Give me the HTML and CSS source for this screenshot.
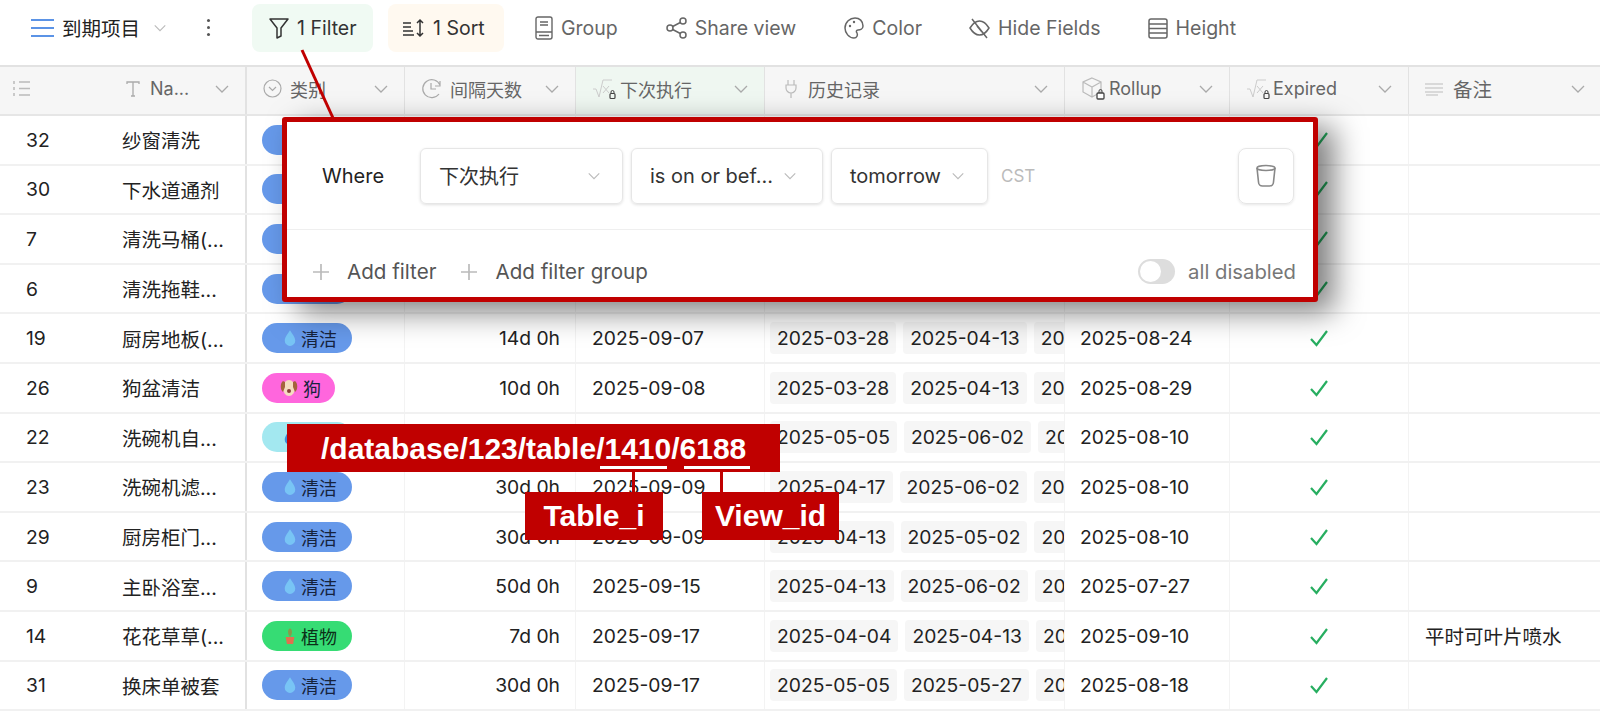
FILE: index.html
```html
<!DOCTYPE html>
<html lang="en">
<head>
  <meta charset="UTF-8">
  <meta name="viewport" content="width=device-width, initial-scale=1.0">
  <title>到期项目</title>
  <link rel="stylesheet" href="styles.css">
</head>
<body>
  <svg class="defs" width="0" height="0">
    <symbol id="chev" viewBox="0 0 16 16"><path d="M2 5l6 6 6-6" fill="none" stroke="currentColor" stroke-width="1.3"/></symbol>
    <symbol id="drop" viewBox="0 0 16 20"><path d="M8 1c3 5 6 8 6 12a6 6 0 0 1-12 0c0-4 3-7 6-12z" fill="#78c4f5"/></symbol>
    <symbol id="drop-dark" viewBox="0 0 16 20"><path d="M8 1c3 5 6 8 6 12a6 6 0 0 1-12 0c0-4 3-7 6-12z" fill="#3f8fd8"/></symbol>
    <symbol id="dog" viewBox="0 0 20 20">
      <ellipse cx="10" cy="10" rx="6" ry="8" fill="#f5dcc0"/>
      <path d="M4 3c-3 2-3 9 0 11l2-5V4zM16 3c3 2 3 9 0 11l-2-5V4z" fill="#a5633c"/>
      <circle cx="10" cy="13" r="2" fill="#8a3b3b"/>
    </symbol>
    <symbol id="plant" viewBox="0 0 16 20">
      <path d="M8 1c3 2 3 6 0 10-3-4-3-8 0-10z" fill="#8a9a4a"/>
      <path d="M3 11h10l-1.500 8h-7z" fill="#e2704f"/>
    </symbol>
    <symbol id="check" viewBox="0 0 20 18"><path d="M2 10l5.500 6L18 2" fill="none" stroke="#27ae60" stroke-width="2.200"/></symbol>
    <symbol id="sqrt" viewBox="0 0 24 22">
      <path d="M1 11h3l3 8 4-17h9" fill="none" stroke="#ccc" stroke-width="1"/>
      <path d="M11 8l6 7M17 8l-6 7" stroke="#ccc" stroke-width="1"/>
      <rect x="18" y="15.500" width="5" height="5" rx="1" fill="none" stroke="#444" stroke-width="1.200"/>
      <path d="M19 15.500v-1.500a1.500 1.500 0 0 1 3 0v1.500" fill="none" stroke="#444"/>
    </symbol>
    <symbol id="plus" viewBox="0 0 18 18"><path d="M9 1v16M1 9h16" stroke="#bbb" stroke-width="1.700"/></symbol>
  </svg>

  <div class="toolbar">
    <svg class="menu-icon" width="23" height="20" viewBox="0 0 23 20"><path d="M0 2h23M0 10h23M0 18h23" stroke="#5b93e6" stroke-width="2"/></svg>
    <span class="view-name">到期项目</span>
    <svg class="view-chev" width="14" height="14"><use href="#chev"/></svg>
    <span class="dots"></span>
    <div class="tool tool-filter">
      <svg width="22" height="24" viewBox="0 0 22 24"><path d="M2 3h18l-7 9v8l-4 2V12z" fill="none" stroke="#333" stroke-width="1.500" stroke-linejoin="round"/></svg>
      <span>1 Filter</span>
    </div>
    <div class="tool tool-sort">
      <svg width="23" height="20" viewBox="0 0 23 20"><path d="M1 5h8M1 9h8M1 13h10M1 17h11M18 2v16M15 5l3-3 3 3M15 15l3 3 3-3" fill="none" stroke="#333" stroke-width="1.500"/></svg>
      <span>1 Sort</span>
    </div>
    <div class="tool tool-group">
      <svg width="18" height="24" viewBox="0 0 18 24"><path d="M3 1h12a2 2 0 0 1 2 2v18a2 2 0 0 1-2 2H3a2 2 0 0 1-2-2V3a2 2 0 0 1 2-2zM1 16h16M5 6h8M5 9h8M4 19.500h10" fill="none" stroke="#666" stroke-width="1.400"/></svg>
      <span>Group</span>
    </div>
    <div class="tool tool-share">
      <svg width="21" height="24" viewBox="0 0 21 24"><circle cx="4" cy="12" r="3" fill="none" stroke="#666" stroke-width="1.500"/><circle cx="17" cy="5" r="3" fill="none" stroke="#666" stroke-width="1.500"/><circle cx="17" cy="19" r="3" fill="none" stroke="#666" stroke-width="1.500"/><path d="M6.700 10.500l7.600-4M6.700 13.500l7.600 4" stroke="#666" stroke-width="1.500"/></svg>
      <span>Share view</span>
    </div>
    <div class="tool tool-color">
      <svg width="20" height="24" viewBox="0 0 20 24"><path d="M11 2c4.500 0 8 3 8 8 0 3-3 4-5 4-2 0-2 2-1 3 1 2 0 5-3 5-5 0-9-5-9-10 0-6 5-10 10-10z" fill="none" stroke="#666" stroke-width="1.500"/><circle cx="6" cy="10" r="1.200" fill="#666"/><circle cx="10" cy="6" r="1.200" fill="#666"/></svg>
      <span>Color</span>
    </div>
    <div class="tool tool-hide">
      <svg width="21" height="24" viewBox="0 0 21 24"><path d="M1 12c3-5 6-7 9.500-7S17 7 20 12c-3 5-6 7-9.500 7S4 17 1 12z" fill="none" stroke="#666" stroke-width="1.500"/><path d="M3 3l15 19M8 10l5 6" stroke="#666" stroke-width="1.500"/></svg>
      <span>Hide Fields</span>
    </div>
    <div class="tool tool-height">
      <svg width="20" height="24" viewBox="0 0 20 24"><rect x="1" y="3" width="18" height="19" rx="2" fill="none" stroke="#666" stroke-width="1.500"/><path d="M1 8h18M1 12.500h18M1 17h18" stroke="#666" stroke-width="1.500"/></svg>
      <span>Height</span>
    </div>
  </div>

  <div class="table">
    <div class="row head">
      <div class="cell c-id">
        <svg width="17" height="17" viewBox="0 0 17 17"><path d="M6 2h11M6 8.500h11M6 15h11M1 1v3M1 7v3M1 13v3" stroke="#bbb" stroke-width="1.500"/></svg>
      </div>
      <div class="cell c-name">
        <svg width="14" height="16" viewBox="0 0 14 16"><path d="M1 3V1h12v2M7 1v14M5 15h4" fill="none" stroke="#aaa" stroke-width="1.300"/></svg>
        <span>Na...</span><svg class="chev" width="16" height="16"><use href="#chev"/></svg>
      </div>
      <div class="cell c-cat">
        <svg width="19" height="19" viewBox="0 0 19 19"><circle cx="9.500" cy="9.500" r="8.500" fill="none" stroke="#aaa" stroke-width="1.200"/><path d="M6 8l3.500 3.500L13 8" fill="none" stroke="#aaa" stroke-width="1.200"/></svg>
        <span>类别</span><svg class="chev" width="16" height="16"><use href="#chev"/></svg>
      </div>
      <div class="cell c-int">
        <svg width="21" height="21" viewBox="0 0 21 21"><path d="M18 16A9 9 0 1 1 19 7M10 5v6h5M19 3v5h-5" fill="none" stroke="#aaa" stroke-width="1.200"/></svg>
        <span>间隔天数</span><svg class="chev" width="16" height="16"><use href="#chev"/></svg>
      </div>
      <div class="cell c-next">
        <svg class="lock-icon" width="24" height="22"><use href="#sqrt"/></svg>
        <span>下次执行</span><svg class="chev" width="16" height="16"><use href="#chev"/></svg>
      </div>
      <div class="cell c-hist">
        <svg width="12" height="20" viewBox="0 0 12 20"><path d="M3 1v5M9 1v5M1 6h10v3a5 5 0 0 1-10 0zM6 14v5" fill="none" stroke="#bbb" stroke-width="1.200"/></svg>
        <span>历史记录</span><svg class="chev" width="16" height="16"><use href="#chev"/></svg>
      </div>
      <div class="cell c-roll">
        <svg width="24" height="24" viewBox="0 0 24 24"><path d="M10 1l9 4v10l-9 5-9-5V5zM1 5l9 5 9-5M10 10v10" fill="none" stroke="#bbb" stroke-width="1.200"/><rect x="15" y="16" width="7" height="6" rx="1" fill="#fff" stroke="#444" stroke-width="1.300"/><path d="M17 16v-2a1.500 1.500 0 0 1 3 0v2" fill="none" stroke="#444"/></svg>
        <span>Rollup</span><svg class="chev" width="16" height="16"><use href="#chev"/></svg>
      </div>
      <div class="cell c-exp">
        <svg class="lock-icon" width="24" height="22"><use href="#sqrt"/></svg>
        <span>Expired</span><svg class="chev" width="16" height="16"><use href="#chev"/></svg>
      </div>
      <div class="cell c-note">
        <svg width="18" height="14" viewBox="0 0 18 14"><path d="M0 2h18M0 6h18M0 10h18M1 13h12" stroke="#bbb" stroke-width="1.200"/></svg>
        <span>备注</span><svg class="chev" width="16" height="16"><use href="#chev"/></svg>
      </div>
    </div>

    <div class="row">
      <div class="cell c-id">32</div>
      <div class="cell c-name">纱窗清洗</div>
      <div class="cell c-cat"><span class="tag tag-blue tag-wide"></span></div>
      <div class="cell c-int"></div>
      <div class="cell c-next"></div>
      <div class="cell c-hist"></div>
      <div class="cell c-roll"></div>
      <div class="cell c-exp"><svg width="20" height="18"><use href="#check"/></svg></div>
      <div class="cell c-note"></div>
    </div>
    <div class="row">
      <div class="cell c-id">30</div>
      <div class="cell c-name">下水道通剂</div>
      <div class="cell c-cat"><span class="tag tag-blue tag-wide"></span></div>
      <div class="cell c-int"></div>
      <div class="cell c-next"></div>
      <div class="cell c-hist"></div>
      <div class="cell c-roll"></div>
      <div class="cell c-exp"><svg width="20" height="18"><use href="#check"/></svg></div>
      <div class="cell c-note"></div>
    </div>
    <div class="row">
      <div class="cell c-id">7</div>
      <div class="cell c-name">清洗马桶(...</div>
      <div class="cell c-cat"><span class="tag tag-blue tag-wide"></span></div>
      <div class="cell c-int"></div>
      <div class="cell c-next"></div>
      <div class="cell c-hist"></div>
      <div class="cell c-roll"></div>
      <div class="cell c-exp"><svg width="20" height="18"><use href="#check"/></svg></div>
      <div class="cell c-note"></div>
    </div>
    <div class="row">
      <div class="cell c-id">6</div>
      <div class="cell c-name">清洗拖鞋...</div>
      <div class="cell c-cat"><span class="tag tag-blue tag-wide"></span></div>
      <div class="cell c-int"></div>
      <div class="cell c-next"></div>
      <div class="cell c-hist"></div>
      <div class="cell c-roll"></div>
      <div class="cell c-exp"><svg width="20" height="18"><use href="#check"/></svg></div>
      <div class="cell c-note"></div>
    </div>
    <div class="row">
      <div class="cell c-id">19</div>
      <div class="cell c-name">厨房地板(...</div>
      <div class="cell c-cat"><span class="tag tag-blue"><svg width="14" height="18"><use href="#drop"/></svg>清洁</span></div>
      <div class="cell c-int">14d 0h</div>
      <div class="cell c-next">2025-09-07</div>
      <div class="cell c-hist"><span class="date">2025-03-28</span><span class="date">2025-04-13</span><span class="date">20</span></div>
      <div class="cell c-roll">2025-08-24</div>
      <div class="cell c-exp"><svg width="20" height="18"><use href="#check"/></svg></div>
      <div class="cell c-note"></div>
    </div>
    <div class="row">
      <div class="cell c-id">26</div>
      <div class="cell c-name">狗盆清洁</div>
      <div class="cell c-cat"><span class="tag tag-pink"><svg width="20" height="20"><use href="#dog"/></svg>狗</span></div>
      <div class="cell c-int">10d 0h</div>
      <div class="cell c-next">2025-09-08</div>
      <div class="cell c-hist"><span class="date">2025-03-28</span><span class="date">2025-04-13</span><span class="date">20</span></div>
      <div class="cell c-roll">2025-08-29</div>
      <div class="cell c-exp"><svg width="20" height="18"><use href="#check"/></svg></div>
      <div class="cell c-note"></div>
    </div>
    <div class="row">
      <div class="cell c-id">22</div>
      <div class="cell c-name">洗碗机自...</div>
      <div class="cell c-cat"><span class="tag tag-cyan tag-wide"><svg width="14" height="18"><use href="#drop-dark"/></svg></span></div>
      <div class="cell c-int"></div>
      <div class="cell c-next"></div>
      <div class="cell c-hist"><span class="date">2025-05-05</span><span class="date">2025-06-02</span><span class="date">20</span></div>
      <div class="cell c-roll">2025-08-10</div>
      <div class="cell c-exp"><svg width="20" height="18"><use href="#check"/></svg></div>
      <div class="cell c-note"></div>
    </div>
    <div class="row">
      <div class="cell c-id">23</div>
      <div class="cell c-name">洗碗机滤...</div>
      <div class="cell c-cat"><span class="tag tag-blue"><svg width="14" height="18"><use href="#drop"/></svg>清洁</span></div>
      <div class="cell c-int">30d 0h</div>
      <div class="cell c-next">2025-09-09</div>
      <div class="cell c-hist"><span class="date">2025-04-17</span><span class="date">2025-06-02</span><span class="date">20</span></div>
      <div class="cell c-roll">2025-08-10</div>
      <div class="cell c-exp"><svg width="20" height="18"><use href="#check"/></svg></div>
      <div class="cell c-note"></div>
    </div>
    <div class="row">
      <div class="cell c-id">29</div>
      <div class="cell c-name">厨房柜门...</div>
      <div class="cell c-cat"><span class="tag tag-blue"><svg width="14" height="18"><use href="#drop"/></svg>清洁</span></div>
      <div class="cell c-int">30d 0h</div>
      <div class="cell c-next">2025-09-09</div>
      <div class="cell c-hist"><span class="date">2025-04-13</span><span class="date">2025-05-02</span><span class="date">20</span></div>
      <div class="cell c-roll">2025-08-10</div>
      <div class="cell c-exp"><svg width="20" height="18"><use href="#check"/></svg></div>
      <div class="cell c-note"></div>
    </div>
    <div class="row">
      <div class="cell c-id">9</div>
      <div class="cell c-name">主卧浴室...</div>
      <div class="cell c-cat"><span class="tag tag-blue"><svg width="14" height="18"><use href="#drop"/></svg>清洁</span></div>
      <div class="cell c-int">50d 0h</div>
      <div class="cell c-next">2025-09-15</div>
      <div class="cell c-hist"><span class="date">2025-04-13</span><span class="date">2025-06-02</span><span class="date">20</span></div>
      <div class="cell c-roll">2025-07-27</div>
      <div class="cell c-exp"><svg width="20" height="18"><use href="#check"/></svg></div>
      <div class="cell c-note"></div>
    </div>
    <div class="row">
      <div class="cell c-id">14</div>
      <div class="cell c-name">花花草草(...</div>
      <div class="cell c-cat"><span class="tag tag-green"><svg width="14" height="18"><use href="#plant"/></svg>植物</span></div>
      <div class="cell c-int">7d 0h</div>
      <div class="cell c-next">2025-09-17</div>
      <div class="cell c-hist"><span class="date">2025-04-04</span><span class="date">2025-04-13</span><span class="date">20</span></div>
      <div class="cell c-roll">2025-09-10</div>
      <div class="cell c-exp"><svg width="20" height="18"><use href="#check"/></svg></div>
      <div class="cell c-note">平时可叶片喷水</div>
    </div>
    <div class="row">
      <div class="cell c-id">31</div>
      <div class="cell c-name">换床单被套</div>
      <div class="cell c-cat"><span class="tag tag-blue"><svg width="14" height="18"><use href="#drop"/></svg>清洁</span></div>
      <div class="cell c-int">30d 0h</div>
      <div class="cell c-next">2025-09-17</div>
      <div class="cell c-hist"><span class="date">2025-05-05</span><span class="date">2025-05-27</span><span class="date">20</span></div>
      <div class="cell c-roll">2025-08-18</div>
      <div class="cell c-exp"><svg width="20" height="18"><use href="#check"/></svg></div>
      <div class="cell c-note"></div>
    </div>
  </div>

  <!-- filter popup -->
  <div class="popup">
    <div class="filter-row">
      <span class="where">Where</span>
      <div class="select sel-field"><span>下次执行</span><svg width="14" height="14"><use href="#chev"/></svg></div>
      <div class="select sel-op"><span>is on or bef...</span><svg width="14" height="14"><use href="#chev"/></svg></div>
      <div class="select sel-val"><span>tomorrow</span><svg width="14" height="14"><use href="#chev"/></svg></div>
      <span class="tz">CST</span>
      <div class="trash">
        <svg width="20" height="23" viewBox="0 0 20 23"><ellipse cx="10" cy="4" rx="9" ry="2.500" fill="none" stroke="#888" stroke-width="1.600"/><path d="M1 4l1.500 14a4 4 0 0 0 4 4h7a4 4 0 0 0 4-4L19 4" fill="none" stroke="#888" stroke-width="1.600"/></svg>
      </div>
    </div>
    <div class="filter-foot">
      <span class="add"><svg width="18" height="18"><use href="#plus"/></svg>Add filter</span>
      <span class="add"><svg width="18" height="18"><use href="#plus"/></svg>Add filter group</span>
      <span class="toggle"></span>
      <span class="toggle-label">all disabled</span>
    </div>
  </div>

  <!-- red annotations drawn on top of the screenshot -->
  <svg class="pointer" width="40" height="72" viewBox="0 0 40 72"><path d="M3 1l31 68" stroke="#c00000" stroke-width="3"/></svg>
  <div class="note note-url">/database/123/table/1410/6188</div>
  <div class="bar bar-table"></div>
  <div class="bar bar-view"></div>
  <div class="stem stem-table"></div>
  <div class="stem stem-view"></div>
  <div class="note note-table">Table_i</div>
  <div class="note note-view">View_id</div>
</body>
</html>
```

FILE: styles.css
```css
* {
  box-sizing: border-box;
}

body {
  margin: 0;
  height: 717px;
  overflow: hidden;
  background: #fff;
  font-family: Inter, "Noto Sans CJK SC", sans-serif;
  color: #222;
}

.defs {
  position: absolute;
}

/* toolbar */
.toolbar {
  height: 67px;
  display: flex;
  align-items: center;
  padding: 0 0 10px 31px;
  font-size: 19.5px;
  color: #666;
  border-bottom: 2px solid #e2e2e2;
}

.view-name {
  margin-left: 8px;
  font-size: 19.5px;
  color: #222;
}

.view-chev {
  margin-left: 13px;
  color: #bbb;
}

.dots {
  width: 3px;
  height: 3px;
  margin-left: 40px;
  border-radius: 50%;
  background: #555;
  box-shadow: 0 -7px 0 #555, 0 7px 0 #555;
}

.tool {
  flex: none;
  display: flex;
  align-items: center;
  gap: 8px;
  white-space: nowrap;
}

.tool-filter {
  margin-left: 42px;
  width: 121px;
  height: 48px;
  padding-left: 16px;
  gap: 7px;
  border-radius: 8px;
  background: #f0faf3;
  color: #333;
}

.tool-sort {
  margin-left: 15px;
  width: 116px;
  height: 48px;
  padding-left: 14px;
  border-radius: 8px;
  background: #fff9f0;
  color: #333;
}

.tool-group { margin-left: 31px; }
.tool-share { margin-left: 48px; }
.tool-color { margin-left: 48px; }
.tool-hide { margin-left: 47px; }
.tool-height { margin-left: 47px; }

/* table */
.row {
  display: grid;
  grid-template-columns: 115px 132px 158px 171px 189px 300px 165px 179px 192px;
  height: 49.6px;
  font-size: 19.3px;
  border-bottom: 2px solid #f1f1f1;
}

.cell {
  display: flex;
  align-items: center;
  min-width: 0;
  white-space: nowrap;
  border-right: 1px solid #f3f3f3;
}

.c-id {
  padding-left: 26px;
  border-right: none;
}

.c-name {
  padding-left: 7px;
  font-size: 19.5px;
  border-right: 2px solid #e2e2e2;
}

.c-cat { padding-left: 15px; }

.c-int {
  justify-content: flex-end;
  padding-right: 15px;
}

.c-next { padding-left: 16px; }

.c-hist {
  gap: 7px;
  padding-left: 5px;
  overflow: hidden;
}

.c-roll { padding-left: 15px; }

.c-exp {
  justify-content: center;
  padding-right: 1px;
}

.c-note {
  padding-left: 16px;
  font-size: 19.5px;
  border-right: none;
}

.head {
  height: 49px;
  font-size: 18px;
  color: #666;
  background: #f6f6f6;
  border-bottom: 2px solid #e6e6e6;
}

.head .cell {
  gap: 8px;
  padding: 0 15px 4px 16px;
  border-right: 1px solid #e2e2e2;
  justify-content: flex-start;
}

.head .c-id {
  padding-left: 13px;
  border-right: none;
}

.head .c-name {
  gap: 10px;
  font-size: 18px;
  padding-left: 11px;
  border-right: 2px solid #e2e2e2;
}

.head .c-next {
  gap: 4px;
  background: #eff7f1;
}

.head .c-hist {
  gap: 11px;
  padding-left: 20px;
}

.head .c-roll {
  gap: 3px;
  padding-left: 17px;
}

.head .c-exp {
  gap: 3px;
}

.head .c-note {
  gap: 10px;
  border-right: none;
}

.chev {
  margin-left: auto;
  color: #aaa;
}

.tag {
  display: inline-flex;
  align-items: center;
  gap: 4px;
  height: 30px;
  padding: 0 15px 0 21px;
  border-radius: 15px;
  font-size: 18px;
  color: #16233c;
}

.tag-wide { width: 90px; }
.tag-blue { background: #6699ea; }
.tag-pink { background: #ff66dd; padding-left: 17px; padding-right: 14px; }
.tag-cyan { background: #a3e8f0; }
.tag-green { background: #36dc74; color: #0c2f18; }

.date {
  flex: none;
  padding: 4px 7px;
  border-radius: 4px;
  background: #f6f6f6;
}

/* popup */
.popup {
  position: absolute;
  left: 282px;
  top: 117px;
  width: 1036px;
  height: 185px;
  background: #fff;
  border: 5px solid #c00000;
  border-radius: 3px;
  box-shadow: 16px 10px 30px rgba(0, 0, 0, 0.5);
}

.filter-row {
  display: flex;
  align-items: center;
  height: 108px;
  padding: 0 19px 0 35px;
  border-bottom: 1px solid #efefef;
}

.where {
  width: 98px;
  font-size: 20px;
}

.select {
  display: flex;
  align-items: center;
  gap: 10px;
  height: 56px;
  margin-right: 8px;
  padding: 0 0 0 18px;
  border: 1px solid #e6e6e6;
  border-radius: 6px;
  box-shadow: 0 1px 3px rgba(0, 0, 0, 0.12);
  font-size: 20px;
  color: #333;
  white-space: nowrap;
}

.select svg {
  color: #bbb;
}

.sel-field {
  width: 203px;
  justify-content: space-between;
  padding-right: 21px;
}

.sel-op { width: 192px; }
.sel-val { width: 157px; }

.tz {
  margin-left: 5px;
  font-size: 17px;
  color: #bbb;
}

.trash {
  display: flex;
  align-items: center;
  justify-content: center;
  width: 56px;
  height: 56px;
  margin-left: auto;
  border: 1px solid #e6e6e6;
  border-radius: 8px;
  box-shadow: 0 1px 3px rgba(0, 0, 0, 0.1);
}

.filter-foot {
  display: flex;
  align-items: center;
  padding: 29px 17px 0 25px;
  font-size: 20.6px;
  color: #555;
}

.add {
  display: flex;
  align-items: center;
  gap: 17px;
  margin-right: 24px;
}

.toggle {
  position: relative;
  width: 37px;
  height: 25px;
  margin-left: auto;
  border-radius: 13px;
  background: #ddd;
}

.toggle::before {
  content: "";
  position: absolute;
  left: 2px;
  top: 2px;
  width: 21px;
  height: 21px;
  border-radius: 50%;
  background: #fff;
}

.toggle-label {
  margin-left: 13px;
  font-size: 20.3px;
  color: #777;
}

/* annotations */
.pointer {
  position: absolute;
  left: 299px;
  top: 49px;
}

.note {
  position: absolute;
  display: flex;
  align-items: center;
  justify-content: center;
  background: #c00000;
  color: #fff;
  font-family: "Liberation Sans", Arial, sans-serif;
  font-weight: bold;
  font-size: 30px;
}

.note-url {
  display: block;
  left: 287px;
  top: 424px;
  width: 493px;
  height: 48px;
  padding: 8px 0 0 34px;
  white-space: pre;
}

.bar {
  position: absolute;
  top: 466px;
  height: 3px;
  background: #fff;
}

.bar-table { left: 600px; width: 67px; }
.bar-view { left: 684px; width: 66px; }

.note-table {
  left: 525px;
  top: 492px;
  width: 138px;
  height: 48px;
}

.note-view {
  left: 702px;
  top: 492px;
  width: 137px;
  height: 48px;
}

.stem {
  position: absolute;
  top: 470px;
  width: 3px;
  height: 24px;
  background: #c00000;
}

.stem-table { left: 632px; }
.stem-view { left: 720px; }
```
